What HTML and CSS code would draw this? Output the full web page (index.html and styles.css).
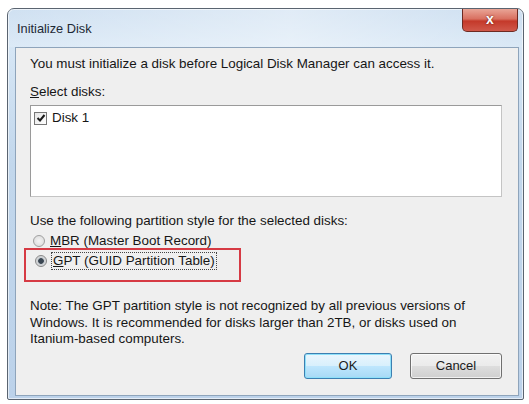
FILE: index.html
```html
<!DOCTYPE html>
<html>
<head>
<meta charset="utf-8">
<link rel="stylesheet" href="styles.css">
</head>
<body>
<div class="window">
  <div class="titlebar">
    <span class="title">Initialize Disk</span>
    <div class="close"><span>x</span></div>
  </div>
  <div class="client">
    <p class="intro">You must initialize a disk before Logical Disk Manager can access it.</p>
    <p class="label"><u>S</u>elect disks:</p>
    <div class="listbox">
      <div class="item"><span class="check"><svg width="10" height="10" viewBox="0 0 10 10"><path d="M1.5 5 L4 7.5 L8.5 2" fill="none" stroke="#1a1a1a" stroke-width="2"/></svg></span>Disk 1</div>
    </div>
    <p class="label2">Use the following partition style for the selected disks:</p>
    <div class="radios">
      <div class="radio"><span class="dot"></span><span><u>M</u>BR (Master Boot Record)</span></div>
      <div class="highlight">
        <div class="radio"><span class="dot on"></span><span class="focus"><u>G</u>PT (GUID Partition Table)</span></div>
      </div>
    </div>
    <p class="note">Note: The GPT partition style is not recognized by all previous versions of<br>Windows. It is recommended for disks larger than 2TB, or disks used on<br>Itanium-based computers.</p>
    <div class="buttons">
      <button class="btn default">OK</button>
      <button class="btn">Cancel</button>
    </div>
  </div>
</div>
</body>
</html>
```
FILE: styles.css
```css
html, body {
  margin: 0;
  background: #ffffff;
}
body {
  padding: 8px 5px 4px 7px;
  font-family: "Liberation Sans", Arial, sans-serif;
  font-size: 13.4px;
  color: #161616;
}
.window {
  height: 392px;
  box-sizing: border-box;
  border: 1px solid #5a6470;
  border-radius: 7px 7px 2px 2px;
  background: linear-gradient(180deg, #c7dbef 0%, #d6e6f5 10%, #c2d7ec 40%, #bcd2ea 100%);
  display: flex;
  flex-direction: column;
  box-shadow: inset 0 0 0 1px rgba(255,255,255,0.6);
}
.titlebar {
  height: 38px;
  display: flex;
  align-items: flex-start;
  justify-content: space-between;
  padding-left: 9px;
  background: linear-gradient(90deg, rgba(255,255,255,0.15), rgba(255,255,255,0.45) 55%, rgba(255,255,255,0.1));
}
.title {
  margin-top: 12px;
  font-size: 12.8px;
  color: #1e2a36;
}
.close {
  width: 56px;
  height: 23px;
  margin-right: 5px;
  box-sizing: border-box;
  border: 1px solid #6d2a22;
  border-top: none;
  border-radius: 0 0 5px 5px;
  background: linear-gradient(180deg, #e9a597 0%, #d97060 45%, #c4392a 55%, #d0584a 100%);
  display: flex;
  align-items: center;
  justify-content: center;
}
.close span {
  color: #fff;
  font-weight: bold;
  font-size: 14px;
  line-height: 14px;
  text-shadow: 0 0 2px #5a1008;
  margin-top: -2px;
}
.client {
  flex: 1;
  margin: 0 4px 3px 7px;
  background: #efefef;
  border: 1px solid #8ea4bb;
  padding: 8px 16px 0 14px;
  display: flex;
  flex-direction: column;
}
p { margin: 0; }
.intro { line-height: 16px; }
.label { margin-top: 12px; line-height: 16px; }
.listbox {
  margin-top: 5px;
  height: 92px;
  box-sizing: border-box;
  background: #fff;
  border: 1px solid #9a9a9a;
  border-right-color: #c4c4c4;
  border-bottom-color: #c4c4c4;
  padding: 5px 3px;
}
.item {
  display: flex;
  align-items: center;
  gap: 5px;
  line-height: 14px;
}
.check {
  width: 11px;
  height: 11px;
  border: 1px solid #777;
  background: linear-gradient(135deg, #e6e6e6, #fff);
  display: flex;
  align-items: center;
  justify-content: center;
}
.label2 { margin-top: 16px; line-height: 16px; }
.radios {
  margin-top: 4px;
  display: flex;
  flex-direction: column;
}
.radio {
  display: flex;
  align-items: center;
  gap: 5px;
  line-height: 16px;
  padding-left: 3px;
}
.dot {
  width: 12px;
  height: 12px;
  border-radius: 50%;
  border: 1px solid #a0a0a0;
  background: radial-gradient(circle, #f4f4f4 0, #d8d8d8 100%);
  box-sizing: border-box;
}
.dot.on {
  border-color: #888;
  background: radial-gradient(circle, #3a4652 0, #3a4652 35%, #c8ccd0 45%, #eaeaea 100%);
}
.highlight {
  margin: -1px 0 0 -6px;
  width: 217px;
  height: 34px;
  box-sizing: border-box;
  border: 2px solid #d63a44;
  padding: 3px 0 0 6px;
}
.focus {
  outline: 1px dotted #444;
  outline-offset: 0;
  padding: 0 1px;
}
.note {
  margin-top: 16px;
  line-height: 16.5px;
}
.buttons {
  margin-top: 5px;
  display: flex;
  justify-content: flex-end;
  gap: 18px;
}
.btn {
  height: 26px;
  box-sizing: border-box;
  font-family: "Liberation Sans", Arial, sans-serif;
  font-size: 13px;
  color: #1c1c1c;
  border-radius: 3px;
  border: 1px solid #707070;
  background: linear-gradient(180deg, #f2f2f2 0%, #ebebeb 48%, #dddddd 52%, #cfcfcf 100%);
  box-shadow: inset 0 0 0 1px rgba(255,255,255,0.7);
  width: 92px;
  padding: 0;
}
.btn.default {
  width: 88px;
  border-color: #3c7fb1;
  background: linear-gradient(180deg, #eaf6fd 0%, #d9f0fc 48%, #bee6fd 52%, #a7d9f5 100%);
  box-shadow: inset 0 0 0 1px #8ee0f9;
}
```
